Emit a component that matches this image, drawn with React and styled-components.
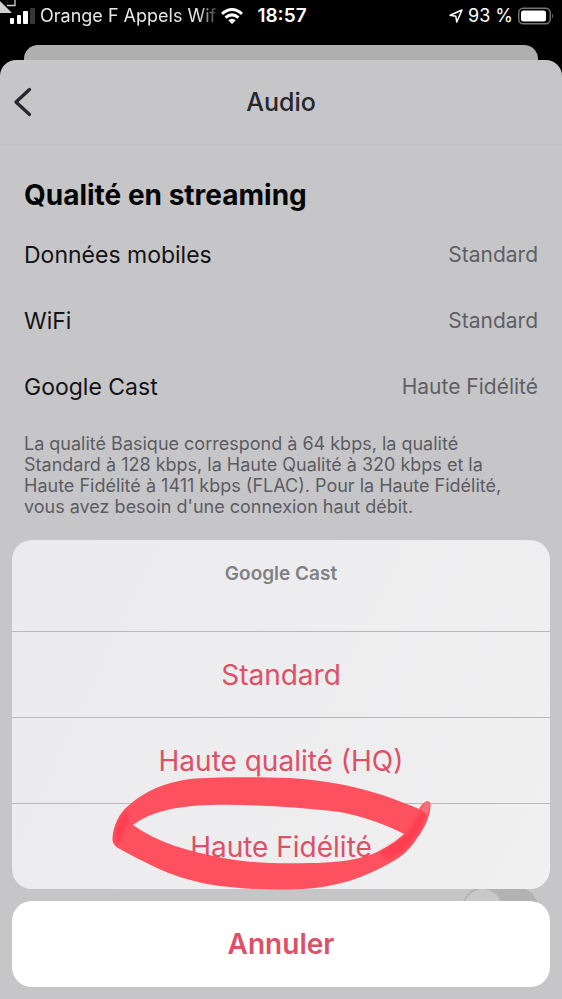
import React from "react";
import styled, { createGlobalStyle } from "styled-components";

const GlobalStyle = createGlobalStyle`
  * { box-sizing: border-box; }
  body {
    margin: 0;
    background: #000;
    font-family: Inter, "Liberation Sans", sans-serif;
  }
  button { font-family: inherit; border: 0; margin: 0; padding: 0; cursor: pointer; }
  h1, h2, p, dl, dd, dt { margin: 0; }
`;

const Screen = styled.div`
  position: relative;
  display: flex;
  flex-direction: column;
  min-height: 100vh;
  overflow: hidden;
  background: #000;
`;

const StatusBar = styled.header`
  display: grid;
  grid-template-columns: 1fr auto 1fr;
  align-items: center;
  height: 45px;
  padding: 0 8px 14px 10px;
  color: #fff;
  font-size: 18px;
  line-height: 24px;
`;

const StatusGroup = styled.div`
  display: flex;
  align-items: center;
  justify-content: ${(p) => p.$justify || "flex-start"};
  gap: ${(p) => p.$gap}px;
  min-width: 0;
  white-space: nowrap;
`;

const Carrier = styled.span`
  flex: none;
  color: #e6e6e6;
  mask-image: linear-gradient(to right, #000 90%, rgba(0, 0, 0, 0.25));
`;

const Clock = styled.time`
  font-size: 19px;
  font-weight: 600;
`;

const CornerPointer = styled.svg`
  position: absolute;
  top: 0;
  left: 0;
`;

const BackCard = styled.div`
  height: 15px;
  margin: 0 24px;
  border-radius: 14px 14px 0 0;
  background: #afafaf;
`;

const Sheet = styled.main`
  flex: 1;
  border-radius: 16px 16px 0 0;
  background: #c6c6c8;
`;

const NavBar = styled.nav`
  display: grid;
  grid-template-columns: 48px 1fr 48px;
  align-items: center;
  height: 85px;
  border-bottom: 1px solid #c1c1c3;
`;

const BackButton = styled.button`
  display: flex;
  align-items: center;
  height: 48px;
  padding-left: 12px;
  background: none;
`;

const Title = styled.h1`
  color: #26262e;
  font-size: 25px;
  font-weight: 500;
  line-height: 32px;
  text-align: center;
`;

const Section = styled.section`
  padding: 32px 24px 0;
`;

const SectionTitle = styled.h2`
  color: #050507;
  font-size: 28px;
  font-weight: 700;
  line-height: 36px;
  margin-bottom: 9px;
`;

const SettingRow = styled.div`
  display: flex;
  align-items: center;
  justify-content: space-between;
  height: 66px;
`;

const SettingName = styled.dt`
  color: #131316;
  font-size: 23px;
  line-height: 32px;
`;

const SettingValue = styled.dd`
  color: #5f5f66;
  font-size: 21px;
  line-height: 28px;
`;

const Settings = styled.dl`
  margin-bottom: 13px;
`;

const Note = styled.p`
  max-width: 490px;
  color: #5c5c62;
  font-size: 18px;
  line-height: 21px;
`;

const SwitchRow = styled.div`
  display: flex;
  justify-content: flex-end;
  padding-top: 370px;
`;

const Switch = styled.input`
  appearance: none;
  display: flex;
  width: 76px;
  height: 42px;
  margin: 0;
  padding: 2px;
  border-radius: 21px;
  background: #b2b2b4;

  &::before {
    content: "";
    width: 38px;
    height: 38px;
    border-radius: 50%;
    background: #c9c9cb;
  }
`;

const ActionSheet = styled.div`
  position: absolute;
  right: 12px;
  bottom: 12px;
  left: 12px;
  display: flex;
  flex-direction: column;
  gap: 12px;
`;

const OptionsArea = styled.div`
  position: relative;
`;

const Options = styled.div`
  overflow: hidden;
  border-radius: 20px;
  background: linear-gradient(115deg, #ebebed, #f0f0f1);
`;

const OptionsTitle = styled.p`
  height: 91px;
  padding-top: 21px;
  color: #818185;
  font-size: 19px;
  font-weight: 600;
  line-height: 26px;
  text-align: center;
`;

const Option = styled.button`
  display: block;
  width: 100%;
  height: 86px;
  background: none;
  color: #dc5068;
  font-size: 28px;
  line-height: 36px;
  border-top: 1px solid #b9b9bc;
`;

const CancelButton = styled.button`
  height: 86px;
  border-radius: 20px;
  background: #fff;
  color: #dc5068;
  font-size: 28px;
  font-weight: 600;
  line-height: 36px;
`;

const Highlight = styled.svg`
  position: absolute;
  bottom: -6px;
  left: 50%;
  margin-left: -170px;
  pointer-events: none;
`;

const settings = [
  ["Données mobiles", "Standard"],
  ["WiFi", "Standard"],
  ["Google Cast", "Haute Fidélité"],
];

const options = ["Standard", "Haute qualité (HQ)", "Haute Fidélité"];

function SignalIcon() {
  return (
    <svg width="25" height="16" viewBox="0 0 25 16" fill="#fff" aria-hidden="true">
      <rect x="0" y="10" width="4" height="6" rx="1" />
      <rect x="7" y="7" width="4" height="9" rx="1" />
      <rect x="13" y="3" width="5" height="13" rx="1" />
      <rect x="20" y="0" width="5" height="16" rx="1" fill="#383838" />
    </svg>
  );
}

function WifiIcon() {
  return (
    <svg width="22" height="16" viewBox="0 0 22 16" fill="none" stroke="#fff" strokeWidth="3" aria-hidden="true">
      <path d="M1 5.8Q11-2.8 21 5.8" />
      <path d="M4.5 9.6Q11 4.2 17.500 9.6" />
      <path d="M7.300 12.300Q11 9 14.700 12.300L11 16Z" fill="#fff" stroke="none" />
    </svg>
  );
}

function LocationIcon() {
  return (
    <svg width="14" height="14" viewBox="0 0 14 14" fill="none" stroke="#fff" strokeWidth="1.500" strokeLinejoin="round" aria-hidden="true">
      <path d="M13 1 1 6.300 6.800 7.300 7.800 13Z" />
    </svg>
  );
}

function BatteryIcon() {
  return (
    <svg width="36" height="18" viewBox="0 0 36 18" aria-hidden="true">
      <rect x="0.750" y="1.250" width="31.500" height="15.500" rx="4.500" fill="none" stroke="#777" strokeWidth="1.400" />
      <rect x="3" y="3.500" width="25" height="11" rx="2.500" fill="#fff" />
      <path d="M34 6.500Q36 9 34 11.500Z" fill="#777" />
    </svg>
  );
}

function HandDrawnLoop() {
  return (
    <Highlight width="340" height="120" viewBox="111 775 340 120" aria-hidden="true">
      <defs>
        <filter id="brushEdge" x="-5%" y="-5%" width="110%" height="110%">
          <feGaussianBlur stdDeviation="0.700" />
        </filter>
        <filter id="brushOverlap" x="-20%" y="-20%" width="140%" height="140%">
          <feGaussianBlur stdDeviation="1.600" />
        </filter>
      </defs>
      <path
        filter="url(#brushEdge)"
        fill="#ff4858"
        fillOpacity="0.950"
        fillRule="evenodd"
        d="M112.500 838C113 827 119 813 128 806C144 791 166 782 190 779C214 776.500 262 777 290 778C326 780 358 787 384 795.500C397 800 409 805 419 809C423 801 430 799 430.500 804C431 815 424 829 417 838C411 848 402 857 390 863C364 878 336 887 303 889C270 890.500 236 889 207 884C188 880 172 875 157 868C143 861 130 855 120 849C114 846 112 842 112.500 838Z
        M133 825C150 812 176 806 210 805C253 804 300 807 340 812C365 817 387 825 404 834C394 843 383 850 370 855C352 861 331 863 310 863C280 864 250 863 223 858C188 851 158 843 133 825Z"
      />
      <path
        filter="url(#brushOverlap)"
        d="M129 822C124 829 122 836 121 843C116 843 114 838 115 834Q118 819 127 810Z"
        fill="#ff3347"
        opacity="0.600"
      />
      <path
        filter="url(#brushOverlap)"
        d="M421 812Q426 812 426 815C422 828 416 837 409 845Q399 856 387 859L378 852Q396 844 407 833Z"
        fill="#ff3347"
        opacity="0.600"
      />
      <path d="M421 809Q425 798 430 803Q430 809 427 815Z" fill="#f4949c" opacity="0.450" />
    </Highlight>
  );
}

export default function App() {
  return (
    <>
      <GlobalStyle />
      <Screen>
        <StatusBar>
          <StatusGroup $gap={5}>
            <SignalIcon />
            <Carrier>Orange F Appels Wif</Carrier>
            <WifiIcon />
          </StatusGroup>
          <Clock>18:57</Clock>
          <StatusGroup $gap={5} $justify="flex-end">
            <LocationIcon />
            <span>93 %</span>
            <BatteryIcon />
          </StatusGroup>
        </StatusBar>
        <CornerPointer width="16" height="14" viewBox="0 0 16 14" aria-hidden="true">
          <path d="M0 1 12 13 0 13Z" fill="#d0d0d0" />
          <path d="M15 0V5.500H7" fill="none" stroke="#d0d0d0" strokeWidth="1.300" />
        </CornerPointer>
        <BackCard />
        <Sheet>
          <NavBar>
            <BackButton aria-label="Retour">
              <svg width="20" height="30" viewBox="0 0 20 30" fill="none" stroke="#26262e" strokeWidth="3.300" strokeLinecap="round" strokeLinejoin="round">
                <path d="M17.500 2.500 4 15 17.500 27.500" />
              </svg>
            </BackButton>
            <Title>Audio</Title>
          </NavBar>
          <Section>
            <SectionTitle>Qualité en streaming</SectionTitle>
            <Settings>
              {settings.map(([name, value]) => (
                <SettingRow key={name}>
                  <SettingName>{name}</SettingName>
                  <SettingValue>{value}</SettingValue>
                </SettingRow>
              ))}
            </Settings>
            <Note>
              La qualité Basique correspond à 64 kbps, la qualité Standard à 128 kbps, la Haute Qualité à 320 kbps
              et la Haute Fidélité à 1411 kbps (FLAC). Pour la Haute Fidélité, vous avez besoin d'une connexion haut
              débit.
            </Note>
            <SwitchRow>
              <Switch type="checkbox" role="switch" aria-label="Option audio" />
            </SwitchRow>
          </Section>
        </Sheet>
        <ActionSheet role="dialog" aria-label="Google Cast">
          <OptionsArea>
            <Options>
              <OptionsTitle>Google Cast</OptionsTitle>
              {options.map((label) => (
                <Option key={label}>{label}</Option>
              ))}
            </Options>
            <HandDrawnLoop />
          </OptionsArea>
          <CancelButton>Annuler</CancelButton>
        </ActionSheet>
      </Screen>
    </>
  );
}
